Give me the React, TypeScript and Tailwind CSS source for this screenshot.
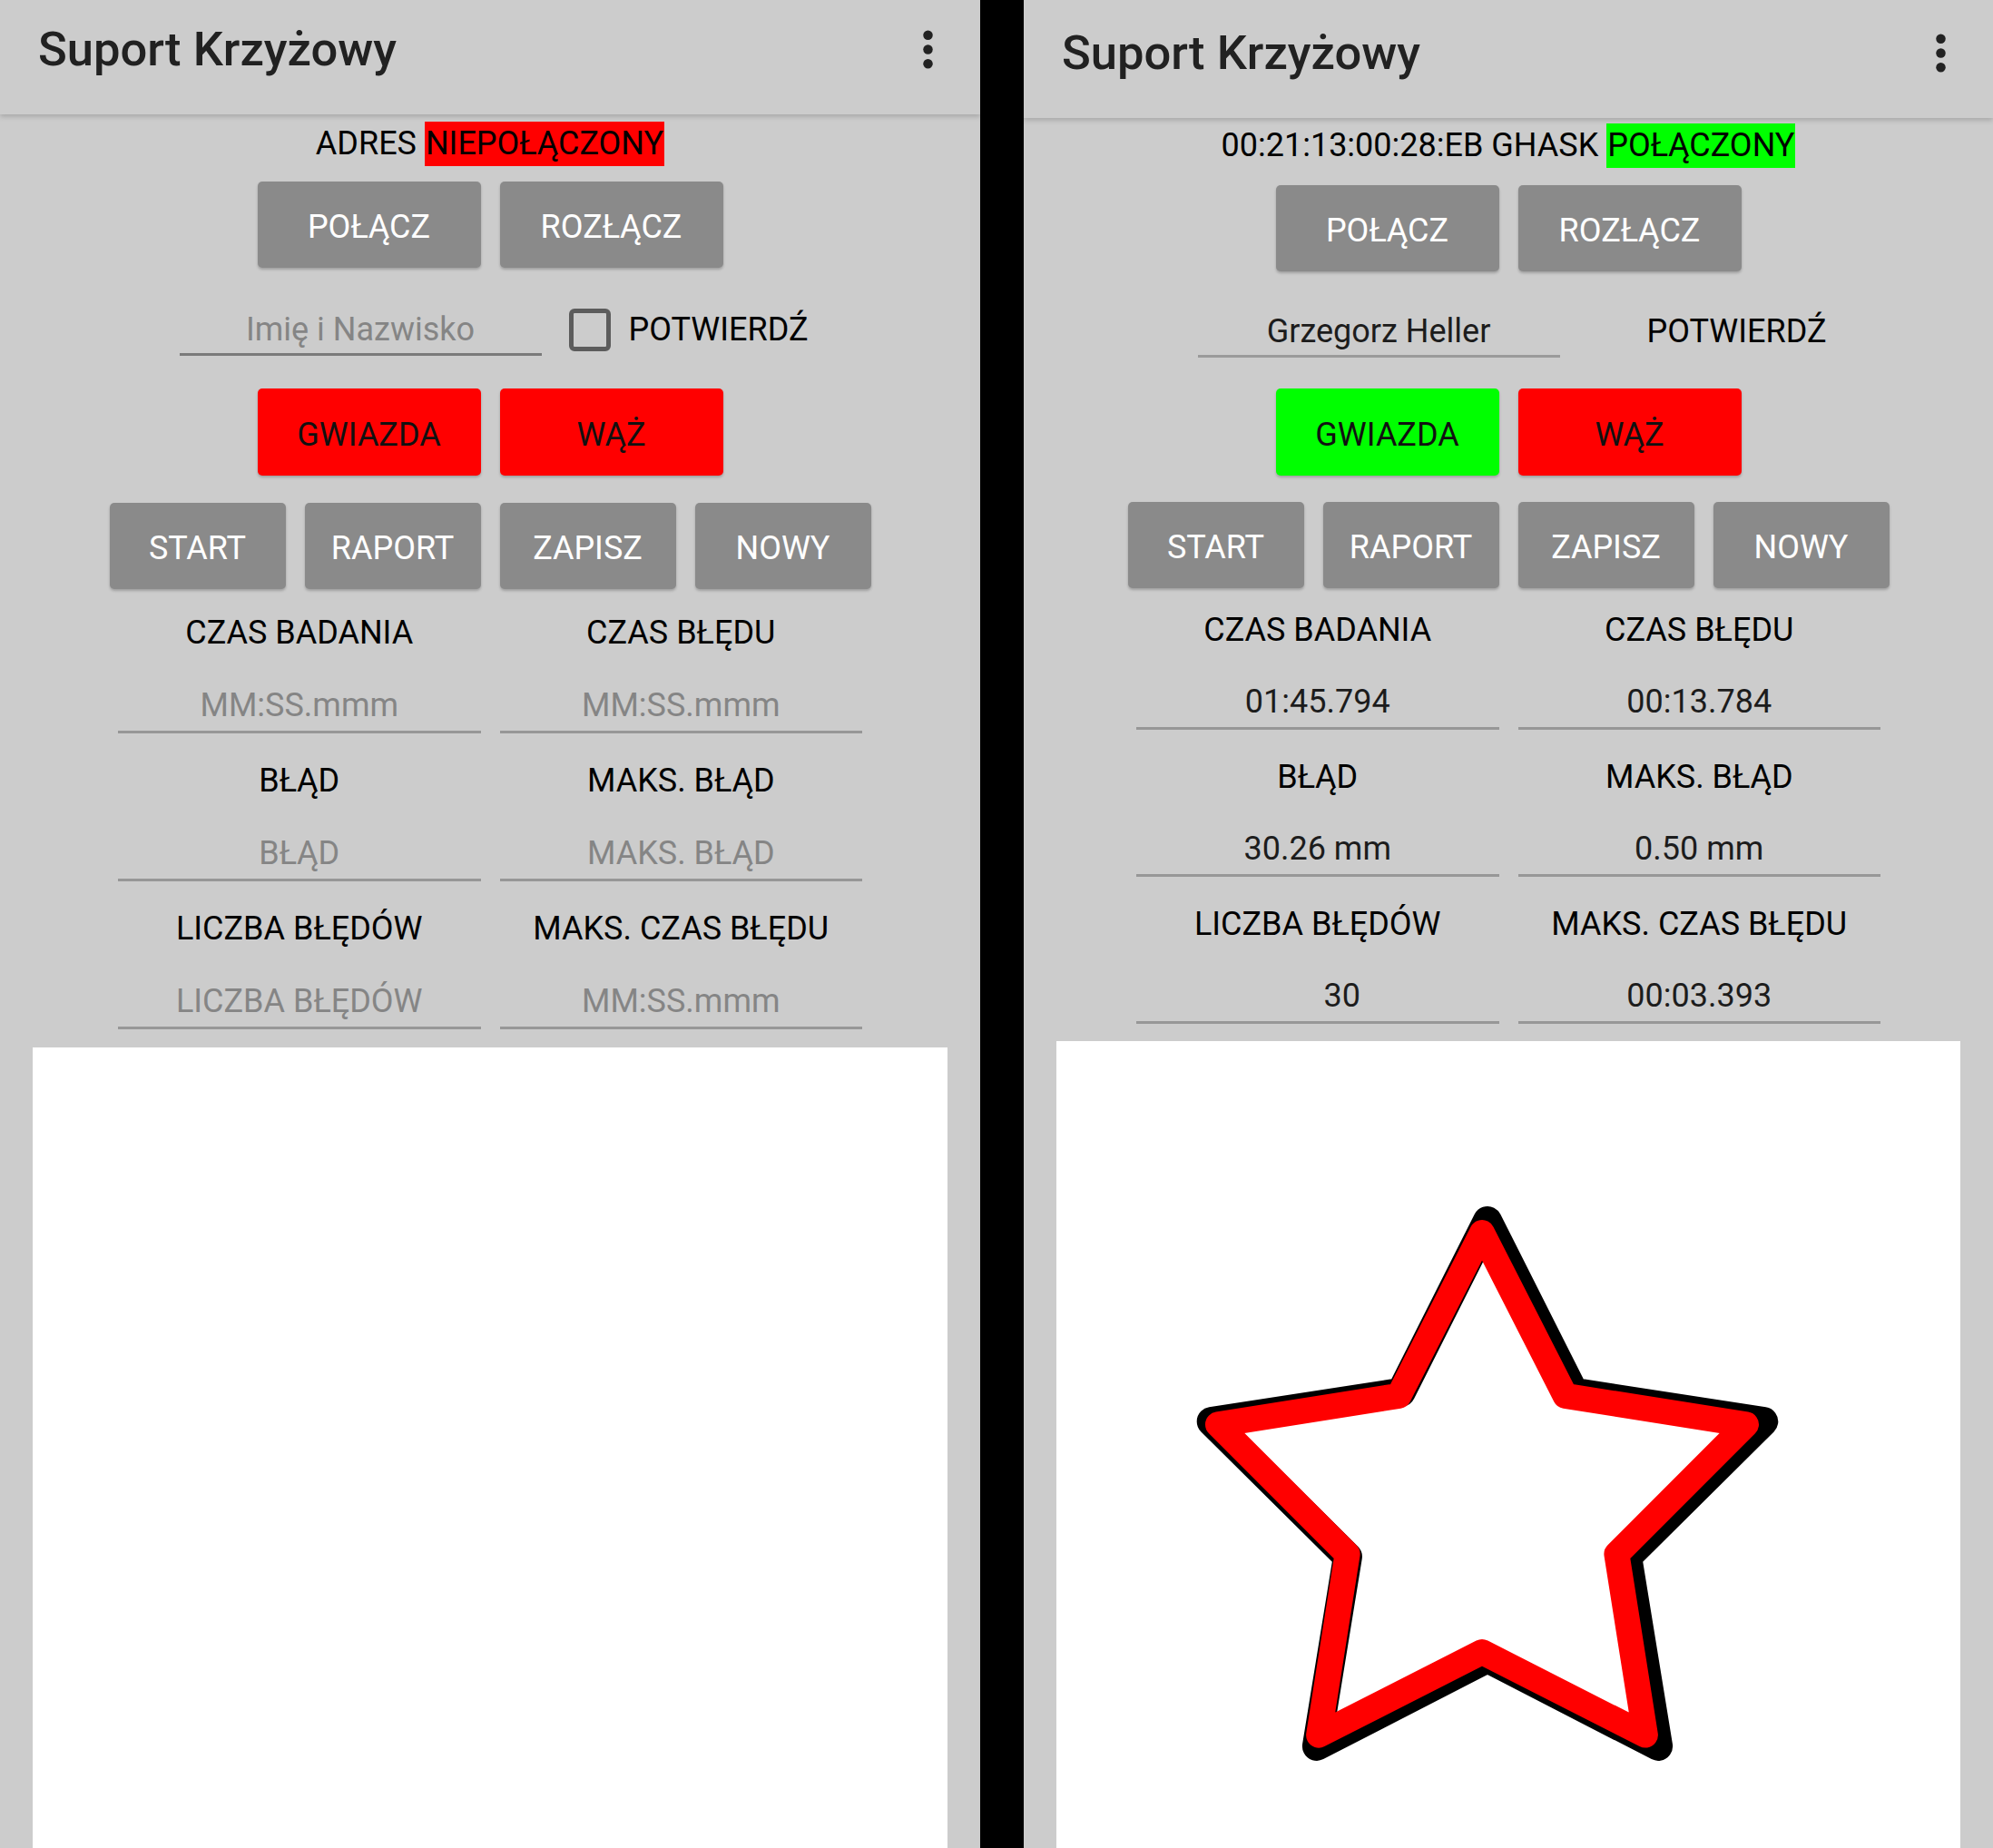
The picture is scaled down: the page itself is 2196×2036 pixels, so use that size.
type Field = { label: string; value: string; hint?: boolean; shift?: boolean };

const leftFields: Field[] = [
  { label: "CZAS BADANIA", value: "MM:SS.mmm", hint: true },
  { label: "CZAS BŁĘDU", value: "MM:SS.mmm", hint: true },
  { label: "BŁĄD", value: "BŁĄD", hint: true },
  { label: "MAKS. BŁĄD", value: "MAKS. BŁĄD", hint: true },
  { label: "LICZBA BŁĘDÓW", value: "LICZBA BŁĘDÓW", hint: true },
  { label: "MAKS. CZAS BŁĘDU", value: "MM:SS.mmm", hint: true },
];

const rightFields: Field[] = [
  { label: "CZAS BADANIA", value: "01:45.794" },
  { label: "CZAS BŁĘDU", value: "00:13.784" },
  { label: "BŁĄD", value: "30.26 mm" },
  { label: "MAKS. BŁĄD", value: "0.50 mm" },
  { label: "LICZBA BŁĘDÓW", value: "30", shift: true },
  { label: "MAKS. CZAS BŁĘDU", value: "00:03.393" },
];

function starPoints(cx: number, cy: number, R: number, r: number) {
  const pts: string[] = [];
  for (let i = 0; i < 10; i++) {
    const rad = i % 2 === 0 ? R : r;
    const a = ((-90 + i * 36) * Math.PI) / 180;
    pts.push(`${(cx + rad * Math.cos(a)).toFixed(1)},${(cy + rad * Math.sin(a)).toFixed(1)}`);
  }
  return pts.join(" ");
}

const MoreIcon = () => (
  <svg width="63" height="63" viewBox="0 0 24 24" fill="#222222">
    <circle cx="12" cy="6" r="2" />
    <circle cx="12" cy="12" r="2" />
    <circle cx="12" cy="18" r="2" />
  </svg>
);

const GreyButton = ({ label, wide }: { label: string; wide?: boolean }) => (
  <div
    className={`${wide ? "w-[246px]" : "w-[194px]"} flex h-[95px] items-center justify-center rounded-[5px] bg-[#8a8a8a] pt-[5px] text-[36px] text-white shadow-[0_2px_3px_rgba(0,0,0,0.22)]`}
  >
    {label}
  </div>
);

const ShapeButton = ({ label, on }: { label: string; on?: boolean }) => (
  <div
    className={`${on ? "bg-[#00ff00]" : "bg-[#ff0000]"} flex h-[96px] w-[246px] items-center justify-center rounded-[5px] pt-[5px] text-[36px] text-[#111111] shadow-[0_2px_3px_rgba(0,0,0,0.22)]`}
  >
    {label}
  </div>
);

const Cell = ({ f, right }: { f: Field; right?: boolean }) => (
  <div className="flex flex-col items-center">
    <div className="text-[36px] leading-[43px] text-black">{f.label}</div>
    <div
      className={`${right ? "mt-[36px]" : "mt-[37px]"} w-full border-b-[3px] border-[#979797] pb-[6px] text-center text-[36px] leading-[43px] ${f.hint ? "text-[#858585]" : "text-[#1c1c1c]"} ${f.shift ? "pl-[54px]" : ""}`}
    >
      {f.value}
    </div>
  </div>
);

const Panel = ({ right }: { right?: boolean }) => {
  const fields = right ? rightFields : leftFields;
  return (
    <div className="flex h-full min-w-0 flex-1 flex-col bg-[#cccccc]">
      {/* toolbar */}
      <div
        className={`${right ? "h-[130px] pb-[14px]" : "h-[126px] pb-[18px]"} relative z-10 flex shrink-0 items-center justify-between bg-[#cccccc] pl-[42px] pr-[26px] shadow-[0_3px_5px_rgba(0,0,0,0.16)]`}
      >
        <div className="text-[52.5px] font-medium text-[#212121]">Suport Krzyżowy</div>
        <MoreIcon />
      </div>

      {/* status */}
      <div className={`${right ? "mt-[6px]" : "mt-[8px]"} text-center text-[36px] leading-[49px] text-black`}>
        {right ? "00:21:13:00:28:EB GHASK " : "ADRES "}
        <span className={`${right ? "bg-[#00ff00]" : "bg-[#ff0000]"} inline-block px-[1px] align-top`}>
          {right ? "POŁĄCZONY" : "NIEPOŁĄCZONY"}
        </span>
      </div>

      <div className={`${right ? "mt-[19px]" : "mt-[17px]"} flex justify-center gap-[21px]`}>
        <GreyButton label="POŁĄCZ" wide />
        <GreyButton label="ROZŁĄCZ" wide />
      </div>

      {/* name + confirm */}
      <div className={`${right ? "mt-[43px]" : "mt-[45px]"} flex items-start justify-center pl-[8px]`}>
        <div
          className={`w-[399px] border-b-[3px] pb-[4px] pt-[2px] text-center text-[36px] leading-[43px] ${right ? "border-[#9a9a9a] text-[#1c1c1c]" : "border-[#7a7a7a] text-[#858585]"}`}
        >
          {right ? "Grzegorz Heller" : "Imię i Nazwisko"}
        </div>
        <div
          className={`ml-[30px] h-[47px] w-[46px] rounded-[6px] border-[5px] border-[#5c5c5c] ${right ? "invisible" : ""}`}
        />
        <div className="ml-[20px] mt-[2px] text-[36px] leading-[43px] text-black">POTWIERDŹ</div>
      </div>

      <div className={`${right ? "mt-[34px]" : "mt-[36px]"} flex justify-center gap-[21px]`}>
        <ShapeButton label="GWIAZDA" on={right} />
        <ShapeButton label="WĄŻ" />
      </div>

      <div className={`${right ? "mt-[29px]" : "mt-[30px]"} flex justify-center gap-[21px]`}>
        <GreyButton label="START" />
        <GreyButton label="RAPORT" />
        <GreyButton label="ZAPISZ" />
        <GreyButton label="NOWY" />
      </div>

      <div
        className={`${right ? "mt-[25px]" : "mt-[27px]"} mx-auto grid w-[820px] grid-cols-2 gap-x-[21px] gap-y-[31px]`}
      >
        {fields.map((f, i) => (
          <Cell key={i} f={f} right={right} />
        ))}
      </div>

      {/* drawing canvas */}
      <div className={`${right ? "mt-[19px]" : "mt-[20px]"} mx-[36px] flex-1 overflow-hidden bg-white`}>
        {right && (
          <svg width="997" height="900" className="block">
            <polygon
              points={starPoints(475, 518, 320, 162)}
              fill="none"
              stroke="#000000"
              strokeWidth="32"
              strokeLinejoin="round"
            />
            <polygon
              points={starPoints(469, 517, 306, 156)}
              fill="none"
              stroke="#ff0000"
              strokeWidth="28"
              strokeLinejoin="round"
            />
          </svg>
        )}
      </div>
    </div>
  );
};

export default function App() {
  return (
    <div className="flex h-[2036px] w-[2196px] overflow-hidden bg-black font-['Roboto',sans-serif]">
      <div className="flex h-full w-[1080px] shrink-0">
        <Panel />
      </div>
      <div className="h-full w-[48px] shrink-0 bg-black" />
      <div className="flex h-full w-[1068px] shrink-0">
        <Panel right />
      </div>
    </div>
  );
}
